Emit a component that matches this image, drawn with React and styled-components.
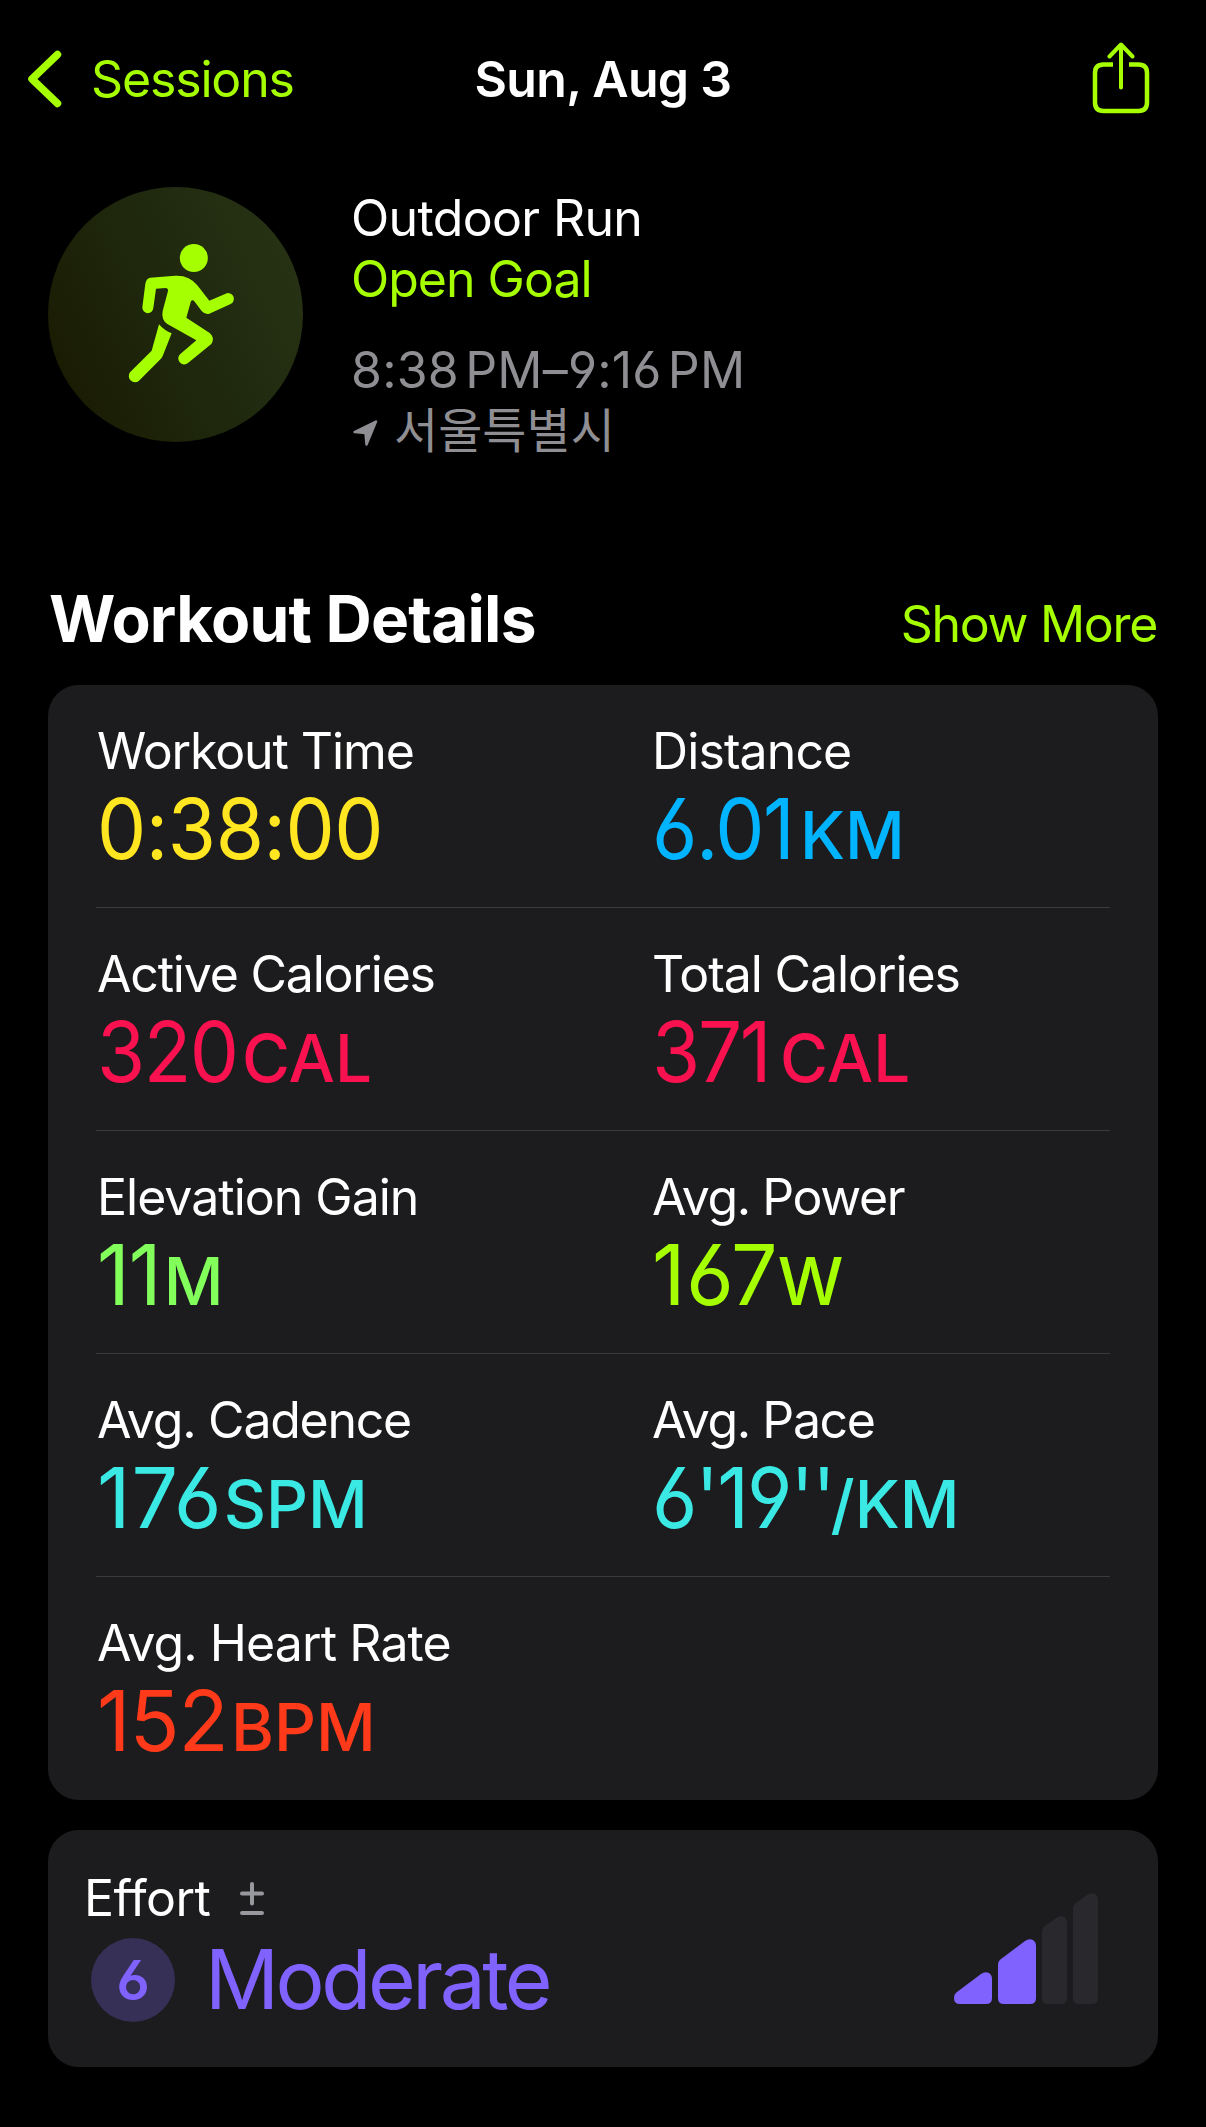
import React from "react";
import styled, { createGlobalStyle } from "styled-components";

const App = () => {
  return (
    <Screen>
      <GlobalStyle />
      <NavBar>
        <BackButton>
          <ChevronIcon />
          Sessions
        </BackButton>
        <NavTitle>Sun, Aug 3</NavTitle>
        <ShareButton aria-label="Share">
          <ShareIcon />
        </ShareButton>
      </NavBar>

      <Summary>
        <WorkoutBadge>
          <RunnerIcon />
        </WorkoutBadge>
        <SummaryText>
          <SummaryLine $tracking="-0.65px">Outdoor Run</SummaryLine>
          <SummaryLine $color="#a6ff00" $tracking="-1px">
            Open Goal
          </SummaryLine>
          <TimeRange>8:38 PM–9:16 PM</TimeRange>
          <Place>
            <LocationIcon />
            <span>서울특별시</span>
          </Place>
        </SummaryText>
      </Summary>

      <SectionHeader>
        <SectionTitle>Workout Details</SectionTitle>
        <ShowMore>Show More</ShowMore>
      </SectionHeader>

      <DetailsCard>
        {metricRows.map((row, index) => (
          <MetricRow key={index}>
            {row.map((metric) => (
              <Metric key={metric.label}>
                <Label $tracking={metric.labelTracking}>{metric.label}</Label>
                <Value $color={metric.color}>
                  <Amount $tracking={metric.tracking} $stretch={metric.stretch}>
                    {metric.value}
                  </Amount>
                  {metric.unit && (
                    <Unit $offset={metric.unitOffset}>{metric.unit}</Unit>
                  )}
                </Value>
              </Metric>
            ))}
          </MetricRow>
        ))}
      </DetailsCard>

      <EffortCard>
        <div>
          <EffortHeading>
            <Label $tracking={-0.55}>Effort</Label>
            <PlusMinusIcon />
          </EffortHeading>
          <EffortLevel>
            <EffortScore>6</EffortScore>
            <EffortName>Moderate</EffortName>
          </EffortLevel>
        </div>
        <EffortBars />
      </EffortCard>
    </Screen>
  );
};

const ChevronIcon = () => (
  <svg width="34" height="58" viewBox="0 0 34 58" fill="none">
    <path
      d="M29.5 4.5L4 29L29.5 53.5"
      stroke="#a6ff00"
      strokeWidth="7.5"
      strokeLinecap="round"
      strokeLinejoin="round"
    />
  </svg>
);

const ShareIcon = () => (
  <svg width="58" height="72" viewBox="0 0 58 72" fill="none">
    <path
      d="M21 22.5H11.5Q3 22.5 3 31V60.5Q3 69 11.5 69H46.5Q55 69 55 60.5V31Q55 22.5 46.5 22.5H37"
      stroke="#a6ff00"
      strokeWidth="4.5"
    />
    <path
      d="M29 45.5V3M17.5 14.5L29 2.5L40.5 14.5"
      stroke="#a6ff00"
      strokeWidth="4"
      strokeLinecap="round"
      strokeLinejoin="round"
    />
  </svg>
);

const RunnerIcon = () => (
  <svg width="255" height="255" viewBox="54 51 765 765" fill="#a6ff00">
    <circle cx="491.5" cy="264" r="42" />
    <path d="M360 323L436 317Q478 315 502 346L538 392L587 371A17 17 0 0 1 602 402L538 431Q524 434 515 423L494 395Q489 388 483 393L469 443L539 489Q556 503 544 522L474 579A17.5 17.5 0 0 1 451 552L499 511L412 462Q393 449 398 423L414 363Q415 354 406 354L378 356L370 414A16.5 16.5 0 0 1 337 412L346 341Q349 325 360 323Z" />
    <path d="M387 463Q402 481 425 490L399 556Q397 562 392 567L327 632A18.5 18.5 0 0 1 300 607L365 542Z" />
  </svg>
);

const LocationIcon = () => (
  <svg width="25" height="26" viewBox="0 0 25 26">
    <path
      d="M1.5 12L23 1.5L13.5 24.5L12.5 13Z"
      fill="#8e8e93"
      stroke="#8e8e93"
      strokeWidth="2.5"
      strokeLinejoin="round"
    />
  </svg>
);

const PlusMinusIcon = () => (
  <svg width="24" height="34" viewBox="0 0 24 34">
    <path
      d="M12 2V21.5M2 11.5H22M2 31H22"
      stroke="#98989f"
      strokeWidth="4"
      strokeLinecap="round"
    />
  </svg>
);

const EffortBars = () => (
  <svg width="144" height="111" viewBox="0 0 144 111">
    <g fill="#8062ff">
      <path d="M3 99L27 81Q31 78 35 80Q38 82 38 86V105Q38 111 32 111H6Q0 111 0 105Q0 101 3 99Z" />
      <path d="M47 66L71 48Q75 45 79 47Q82 49 82 53V105Q82 111 76 111H50Q44 111 44 105V72Q44 68 47 66Z" />
    </g>
    <g fill="#28282d">
      <path d="M91 33L102 25Q106 22 110 24Q113 26 113 30V105Q113 111 107 111H94Q88 111 88 105V39Q88 35 91 33Z" />
      <path d="M122 10L133 2Q137 -1 141 1Q144 3 144 7V105Q144 111 138 111H125Q119 111 119 105V16Q119 12 122 10Z" />
    </g>
  </svg>
);

const GlobalStyle = createGlobalStyle`
  * {
    box-sizing: border-box;
    margin: 0;
    padding: 0;
  }

  body {
    background-color: #000;
    color: #fff;
    font-family: Inter, "Noto Sans CJK KR", sans-serif;
    font-feature-settings: "cv03", "cv04";
  }

  svg {
    display: block;
    flex-shrink: 0;
  }
`;

const Screen = styled.main`
  width: 1206px;
  height: 2127px;
  padding: 0 48px;
  overflow: hidden;
  background-color: #000;
`;

const NavBar = styled.header`
  display: grid;
  grid-template-columns: 1fr auto 1fr;
  align-items: center;
  height: 159px;
  margin: 0 -20px;
`;

const BackButton = styled.button`
  display: flex;
  align-items: center;
  gap: 29px;
  border: none;
  background: none;
  color: #a6ff00;
  font: inherit;
  font-size: 50px;
  line-height: 61px;
  letter-spacing: -1.15px;

  > svg {
    margin-top: -2px;
  }
`;

const NavTitle = styled.h1`
  font-weight: 600;
  font-size: 50px;
  line-height: 61px;
  letter-spacing: -0.7px;
`;

const ShareButton = styled.button`
  justify-self: end;
  margin: -4px 28px 0 0;
  border: none;
  background: none;
`;

const Summary = styled.section`
  display: flex;
  gap: 48px;
  margin-top: 28px;
`;

const WorkoutBadge = styled.div`
  width: 255px;
  height: 255px;
  border-radius: 50%;
  background: linear-gradient(65deg, #1a1c02 10%, #1f280d 50%, #273214 90%);
`;

const SummaryText = styled.div`
  width: 600px;
  padding-top: 1px;
`;

const SummaryLine = styled.p`
  font-size: 50px;
  line-height: 61px;
  letter-spacing: ${({ $tracking }) => $tracking};
  color: ${({ $color }) => $color || "#fff"};
`;

const TimeRange = styled.p`
  margin-top: 30px;
  font-size: 50px;
  line-height: 61px;
  letter-spacing: 0.2px;
  word-spacing: -8px;
  color: #8e8e93;
`;

const Place = styled.p`
  display: flex;
  align-items: center;
  gap: 16px;
  padding-left: 2px;
  font-size: 48px;
  line-height: 60px;
  color: #8e8e93;

  > svg {
    margin-top: 3px;
  }
`;

const SectionHeader = styled.div`
  display: flex;
  justify-content: space-between;
  align-items: baseline;
  margin-top: 119px;
  height: 105px;
`;

const SectionTitle = styled.h2`
  padding-left: 1px;
  font-weight: 700;
  font-size: 64px;
  line-height: 78px;
  letter-spacing: -0.8px;
`;

const ShowMore = styled.a`
  margin-right: 1px;
  color: #a6ff00;
  font-size: 50px;
  line-height: 61px;
  letter-spacing: -1.3px;
`;

const Card = styled.section`
  border-radius: 31px;
  background-color: #1c1c1e;
`;

const DetailsCard = styled(Card)`
  padding: 0 48px;
`;

const MetricRow = styled.div`
  display: grid;
  grid-template-columns: 555px 1fr;
  height: 223px;
  padding-top: 36px;

  &:not(:last-child) {
    border-bottom: 1px solid #3a3a3c;
  }
`;

const Metric = styled.div`
  padding-left: 1px;
`;

const Label = styled.p`
  font-size: 50px;
  line-height: 61px;
  letter-spacing: ${({ $tracking }) => $tracking}px;
`;

const Value = styled.p`
  font-size: 84px;
  line-height: 94px;
  white-space: nowrap;
  color: ${({ $color }) => $color};
`;

/* slightly condensed numerals */
const Amount = styled.span`
  display: inline-block;
  font-weight: 440;
  letter-spacing: ${({ $tracking }) => $tracking}px;
  transform: scaleX(${({ $stretch }) => $stretch || 0.93});
  transform-origin: left;
`;

const Unit = styled.span`
  margin-left: ${({ $offset }) => $offset}px;
  font-weight: 500;
  font-size: 65.5px;
`;

const EffortCard = styled(Card)`
  display: flex;
  justify-content: space-between;
  height: 237px;
  margin-top: 30px;
  padding: 38px 60px 0 36px;

  > svg {
    margin-top: 25px;
  }
`;

const EffortHeading = styled.div`
  display: flex;
  align-items: center;
  gap: 30px;
`;

const EffortLevel = styled.div`
  display: flex;
  align-items: center;
  gap: 30px;
  margin: 9px 0 0 7px;
  color: #8062ff;
`;

const EffortScore = styled.span`
  display: flex;
  justify-content: center;
  align-items: center;
  width: 84px;
  height: 84px;
  border-radius: 50%;
  background-color: #362f56;
  font-weight: 600;
  font-size: 55px;
`;

const EffortName = styled.span`
  font-size: 82px;
  line-height: 84px;
  letter-spacing: -3.5px;
`;

const metricRows = [
  [
    {
      label: "Workout Time",
      labelTracking: -1.1,
      value: "0:38:00",
      tracking: -0.5,
      color: "#ffe620",
    },
    {
      label: "Distance",
      labelTracking: -0.9,
      value: "6.01",
      tracking: -1.5,
      unit: "KM",
      unitOffset: -4,
      color: "#00b4ff",
    },
  ],
  [
    {
      label: "Active Calories",
      labelTracking: -1.2,
      value: "320",
      tracking: -1.7,
      unit: "CAL",
      unitOffset: -6,
      color: "#fa114f",
    },
    {
      label: "Total Calories",
      labelTracking: -1.1,
      value: "371",
      tracking: -2.5,
      unit: "CAL",
      unitOffset: 2,
      color: "#fa114f",
    },
  ],
  [
    {
      label: "Elevation Gain",
      labelTracking: -1,
      value: "11",
      tracking: -1,
      stretch: 0.96,
      unit: "M",
      unitOffset: 0.5,
      color: "#83ff5c",
    },
    {
      label: "Avg. Power",
      labelTracking: -1.4,
      value: "167",
      tracking: 0.5,
      stretch: 0.98,
      unit: "W",
      unitOffset: -3,
      color: "#a6ff00",
    },
  ],
  [
    {
      label: "Avg. Cadence",
      labelTracking: -1.25,
      value: "176",
      tracking: 1,
      stretch: 0.98,
      unit: "SPM",
      unitOffset: -1.5,
      color: "#3ae8e4",
    },
    {
      label: "Avg. Pace",
      labelTracking: -1.4,
      value: "6'19''",
      tracking: -2,
      unit: "/KM",
      unitOffset: -17,
      color: "#3ae8e4",
    },
  ],
  [
    {
      label: "Avg. Heart Rate",
      labelTracking: -0.9,
      value: "152",
      tracking: -1,
      stretch: 0.98,
      unit: "BPM",
      unitOffset: 0.5,
      color: "#ff3a1a",
    },
  ],
];

export default App;
